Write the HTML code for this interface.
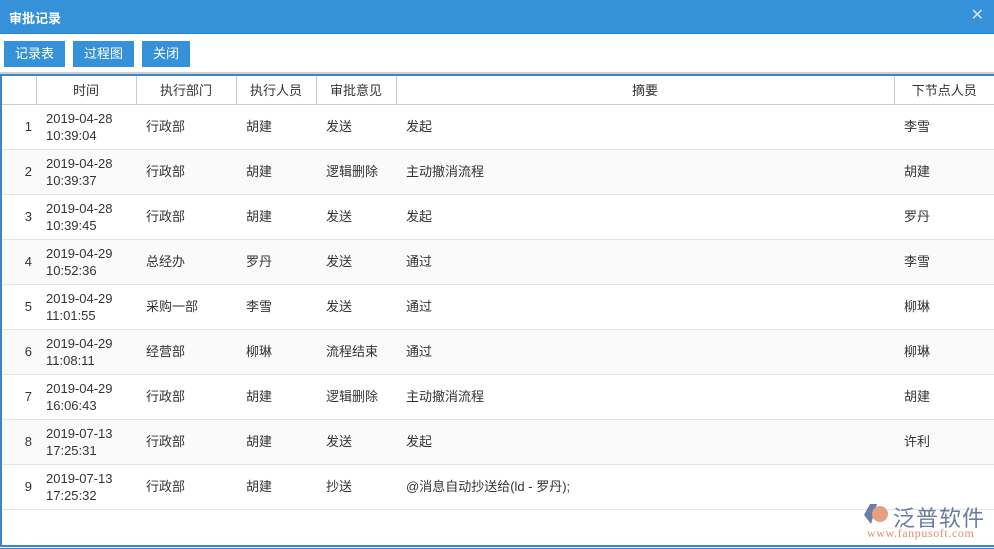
<!DOCTYPE html>
<html><head><meta charset="utf-8"><style>
*{margin:0;padding:0;box-sizing:border-box}
body{width:994px;height:549px;overflow:hidden;background:#fff;font-family:"Liberation Sans","Noto Sans CJK SC",sans-serif;font-size:13px;color:#333;position:relative}
.top{position:absolute;left:0;top:0;width:994px;height:34px;background:#3592d8;border-bottom:1px solid #2a7fc4}
.top .t{position:absolute;left:9px;top:8px;color:#fff;font-weight:bold;font-size:13px}
.top .x{position:absolute;right:10px;top:8px;color:#cfe5f6;font-size:16px;line-height:16px}
.btn{position:absolute;top:41px;height:26px;background:#3592d8;color:#fff;font-size:13px;line-height:26px;text-align:center}
.sep{position:absolute;left:0;top:72px;width:994px;height:2px;background:#d0d0d0}
.frame{position:absolute;left:0;top:74px;width:994px;height:473px;border-left:2px solid #3a86c8;border-top:2px solid #3a86c8;border-bottom:2px solid #3a86c8}
.bot{position:absolute;left:0;top:548px;width:994px;height:1px;background:#3a86c8}
table{position:absolute;left:2px;top:76px;border-collapse:collapse;table-layout:fixed;width:992px}
th{height:28px;font-weight:normal;border-right:1px solid #ccc;border-bottom:1px solid #ccc;text-align:center;color:#333}
th:last-child{border-right:none}
td{height:45px;border-bottom:1px solid #e4e4e4;padding-left:10px;line-height:17px;vertical-align:middle}
td.n{padding-left:0;padding-right:4px;text-align:right}
tr.g td{background:#fafafa}
.logo{position:absolute;left:862px;top:502px}
</style></head><body>
<div class="top"><span class="t">审批记录</span><span class="x">✕</span></div>
<div class="btn" style="left:4px;width:61px">记录表</div>
<div class="btn" style="left:73px;width:61px">过程图</div>
<div class="btn" style="left:142px;width:48px">关闭</div>
<div class="sep"></div>
<div class="frame"></div>
<div class="bot"></div>
<table>
<colgroup><col style="width:34px"><col style="width:100px"><col style="width:100px"><col style="width:80px"><col style="width:80px"><col style="width:498px"><col style="width:100px"></colgroup>
<tr><th></th><th>时间</th><th>执行部门</th><th>执行人员</th><th>审批意见</th><th>摘要</th><th>下节点人员</th></tr>
<tr><td class="n">1</td><td>2019-04-28<br>10:39:04</td><td>行政部</td><td>胡建</td><td>发送</td><td>发起</td><td>李雪</td></tr>
<tr class="g"><td class="n">2</td><td>2019-04-28<br>10:39:37</td><td>行政部</td><td>胡建</td><td>逻辑删除</td><td>主动撤消流程</td><td>胡建</td></tr>
<tr><td class="n">3</td><td>2019-04-28<br>10:39:45</td><td>行政部</td><td>胡建</td><td>发送</td><td>发起</td><td>罗丹</td></tr>
<tr class="g"><td class="n">4</td><td>2019-04-29<br>10:52:36</td><td>总经办</td><td>罗丹</td><td>发送</td><td>通过</td><td>李雪</td></tr>
<tr><td class="n">5</td><td>2019-04-29<br>11:01:55</td><td>采购一部</td><td>李雪</td><td>发送</td><td>通过</td><td>柳琳</td></tr>
<tr class="g"><td class="n">6</td><td>2019-04-29<br>11:08:11</td><td>经营部</td><td>柳琳</td><td>流程结束</td><td>通过</td><td>柳琳</td></tr>
<tr><td class="n">7</td><td>2019-04-29<br>16:06:43</td><td>行政部</td><td>胡建</td><td>逻辑删除</td><td>主动撤消流程</td><td>胡建</td></tr>
<tr class="g"><td class="n">8</td><td>2019-07-13<br>17:25:31</td><td>行政部</td><td>胡建</td><td>发送</td><td>发起</td><td>许利</td></tr>
<tr><td class="n">9</td><td>2019-07-13<br>17:25:32</td><td>行政部</td><td>胡建</td><td>抄送</td><td>@消息自动抄送给(ld - 罗丹);</td><td></td></tr>
</table>
<div class="logo">
<svg width="28" height="24" style="position:absolute;left:0;top:0"><path d="M8 2 L15 2 L9 22 L2 13 Z" fill="#6a7fa8"/><circle cx="18" cy="12" r="8" fill="#e5a080"/></svg>
<span style="position:absolute;left:31px;top:-1px;font-size:22px;color:#6a7ca0;white-space:nowrap;letter-spacing:1px">泛普软件</span>
<span style="position:absolute;left:5px;top:24px;font-size:12px;color:#e09070;font-family:'Liberation Serif',serif;white-space:nowrap;letter-spacing:0.6px">www.fanpusoft.com</span>
</div>
</body></html>
